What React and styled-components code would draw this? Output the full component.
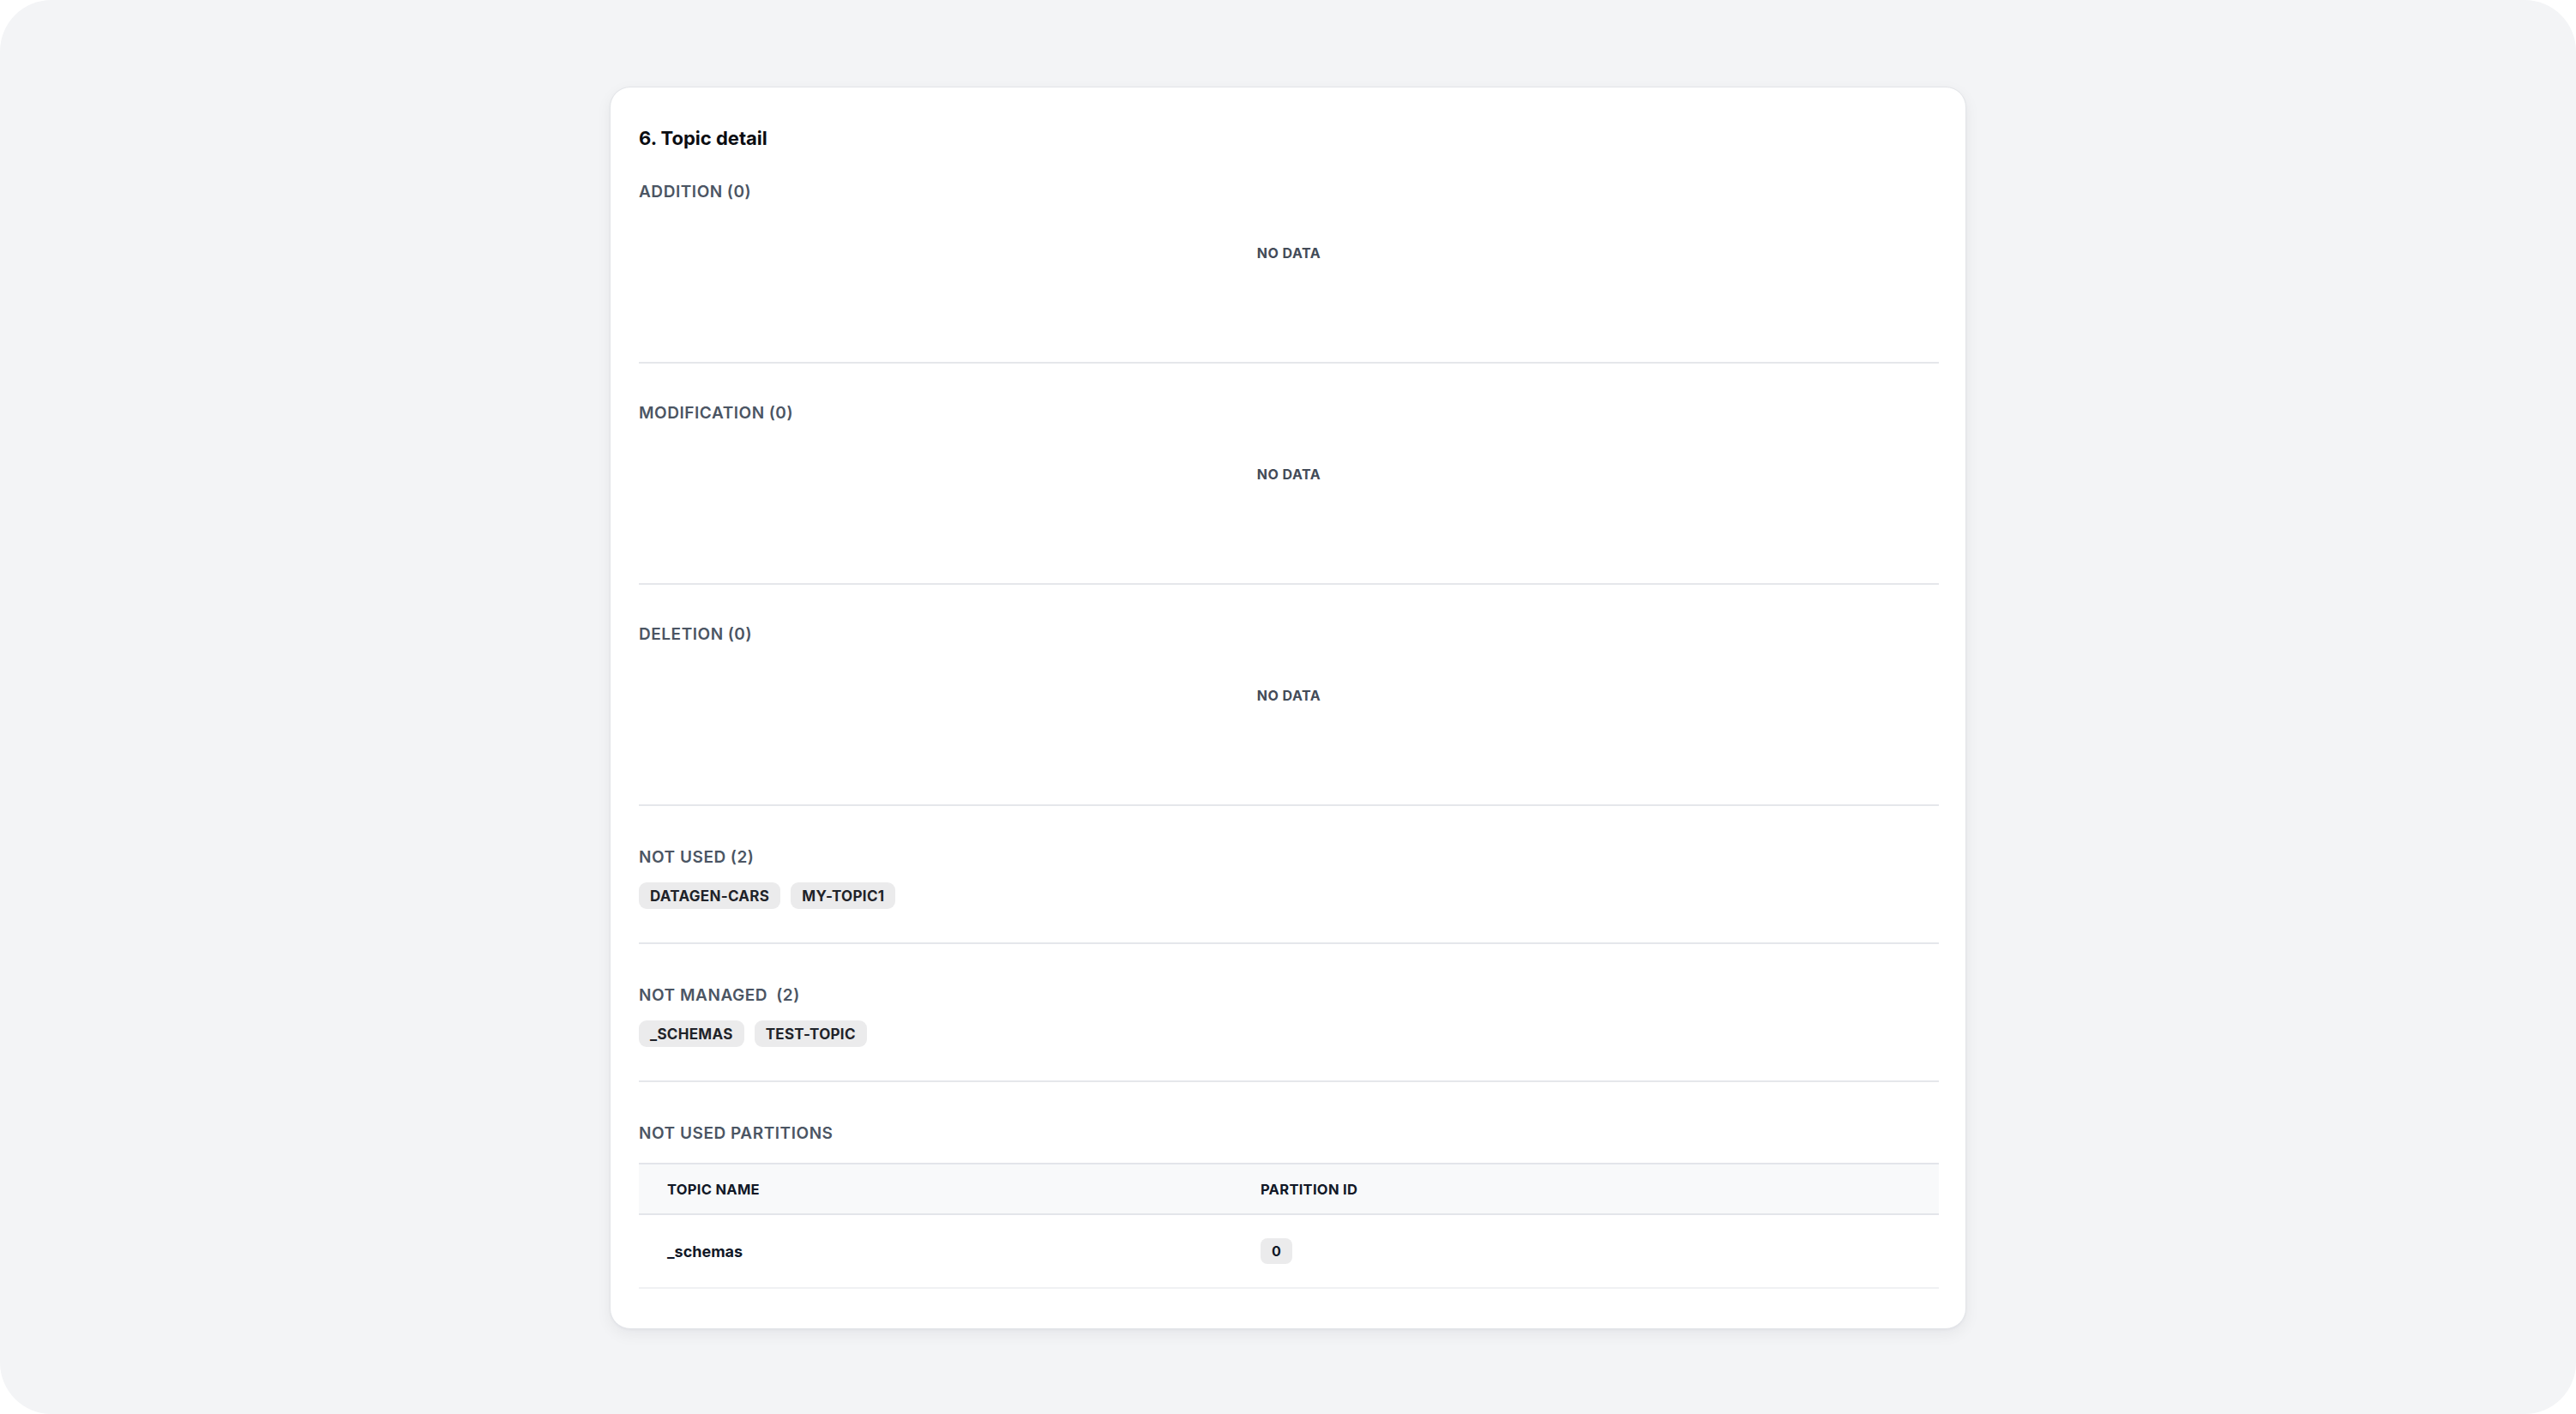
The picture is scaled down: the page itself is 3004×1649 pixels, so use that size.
import React from 'react'
import styled, { createGlobalStyle } from 'styled-components'

const GlobalStyle = createGlobalStyle`
    html, body {
        margin: 0;
        padding: 0;
        background: #ffffff;
    }
    body {
        font-family: Inter, "Noto Sans", "Liberation Sans", sans-serif;
        -webkit-font-smoothing: antialiased;
    }
`

const sections = [
    { id: 'addition', title: 'ADDITION', count: 0, items: [] },
    { id: 'modification', title: 'MODIFICATION', count: 0, items: [] },
    { id: 'deletion', title: 'DELETION', count: 0, items: [] },
    { id: 'not-used', title: 'NOT USED', count: 2, items: ['DATAGEN-CARS', 'MY-TOPIC1'], chips: true },
    { id: 'not-managed', title: 'NOT MANAGED', count: 2, items: ['_SCHEMAS', 'TEST-TOPIC'], chips: true, wide: true },
]

const partitions = [
    { topic: '_schemas', partition: 0 },
]

function TopicDetail() {
    return (
        <Frame>
            <Card>
                <Title>6. Topic detail</Title>
                {
                    sections.map((s) => {
                        return (
                            <Section key={s.id} $loose={s.chips}>
                                <Label>
                                    {s.title}
                                    <Count $wide={s.wide}>({s.count})</Count>
                                </Label>
                                {s.chips ? (
                                    <ChipRow>
                                        {s.items.map((item) => <Chip key={item}>{item}</Chip>)}
                                    </ChipRow>
                                ) : (
                                    <EmptyState>NO DATA</EmptyState>
                                )}
                            </Section>
                        )
                    })
                }
                <Section $last $loose>
                    <Label>NOT USED PARTITIONS</Label>
                    <Table>
                        <thead>
                            <tr>
                                <HeadCell $width="626px">TOPIC NAME</HeadCell>
                                <HeadCell>PARTITION ID</HeadCell>
                            </tr>
                        </thead>
                        <tbody>
                            {partitions.map((p) => (
                                <tr key={p.topic}>
                                    <Cell>{p.topic}</Cell>
                                    <Cell>
                                        <IdChip>{p.partition}</IdChip>
                                    </Cell>
                                </tr>
                            ))}
                        </tbody>
                    </Table>
                </Section>
            </Card>
        </Frame>
    )
}

const Frame = styled.main`
    width: 3004px;
    height: 1649px;
    box-sizing: border-box;
    background-color: #f3f4f6;
    border-radius: 60px;
    display: flex;
    justify-content: center;
    align-items: flex-start;
    padding-top: 101px;
    overflow: hidden;
`

const Card = styled.section`
    width: 1582px;
    box-sizing: border-box;
    background: #ffffff;
    border: 1px solid #e3e5e9;
    border-radius: 24px;
    box-shadow: 0 6px 18px rgba(17, 24, 39, 0.06), 0 1px 3px rgba(17, 24, 39, 0.04);
    padding: 45px 31px 46px 33px;
    display: flex;
    flex-direction: column;
`

const Title = styled.h2`
    margin: 0 0 37px;
    font-size: 22px;
    line-height: 28px;
    font-weight: 700;
    color: #0b0d12;
`

const Section = styled.div`
    padding-top: ${(p) => (p.$loose ? '48px' : '46px')};
    border-bottom: ${(p) => (p.$last ? 'none' : '2px solid #e5e7eb')};
    &:nth-of-type(1) {
        padding-top: 0;
    }
`

const Label = styled.div`
    font-size: 19px;
    line-height: 24px;
    font-weight: 600;
    letter-spacing: 0.55px;
    color: #4b5563;
    text-transform: uppercase;
`

const Count = styled.span`
    margin-left: ${(p) => (p.$wide ? '10px' : '5px')};
`

const EmptyState = styled.div`
    padding: 49px 0 117px;
    text-align: center;
    font-size: 16px;
    line-height: 20px;
    font-weight: 700;
    letter-spacing: 0.5px;
    color: #434b58;
`

const ChipRow = styled.div`
    display: flex;
    gap: 12px;
    padding: 17px 0 39px;
`

const Chip = styled.span`
    display: inline-flex;
    align-items: center;
    height: 31px;
    padding: 0 13px;
    border-radius: 9px;
    background-color: #ebebec;
    font-size: 17px;
    font-weight: 700;
    letter-spacing: 0.3px;
    color: #1f2329;
`

const Table = styled.table`
    width: 100%;
    margin-top: 22px;
    border-collapse: collapse;
    table-layout: fixed;
`

const HeadCell = styled.th`
    width: ${(p) => p.$width || 'auto'};
    height: 57px;
    padding: 0 33px;
    text-align: left;
    background-color: #f8f9fa;
    border-top: 2px solid #e3e5ea;
    border-bottom: 2px solid #e3e5ea;
    font-size: 16.5px;
    font-weight: 700;
    letter-spacing: 0.3px;
    color: #111827;
`

const Cell = styled.td`
    height: 84px;
    padding: 0 33px;
    border-bottom: 2px solid #f0f1f3;
    font-size: 18px;
    font-weight: 700;
    color: #111827;
`

const IdChip = styled.span`
    display: inline-flex;
    align-items: center;
    justify-content: center;
    min-width: 37px;
    height: 30px;
    padding: 0 8px;
    box-sizing: border-box;
    border-radius: 8px;
    background-color: #ebebec;
    font-size: 16px;
    font-weight: 700;
    color: #111827;
`

export default function App() {
    return (
        <>
            <GlobalStyle />
            <TopicDetail />
        </>
    )
}
